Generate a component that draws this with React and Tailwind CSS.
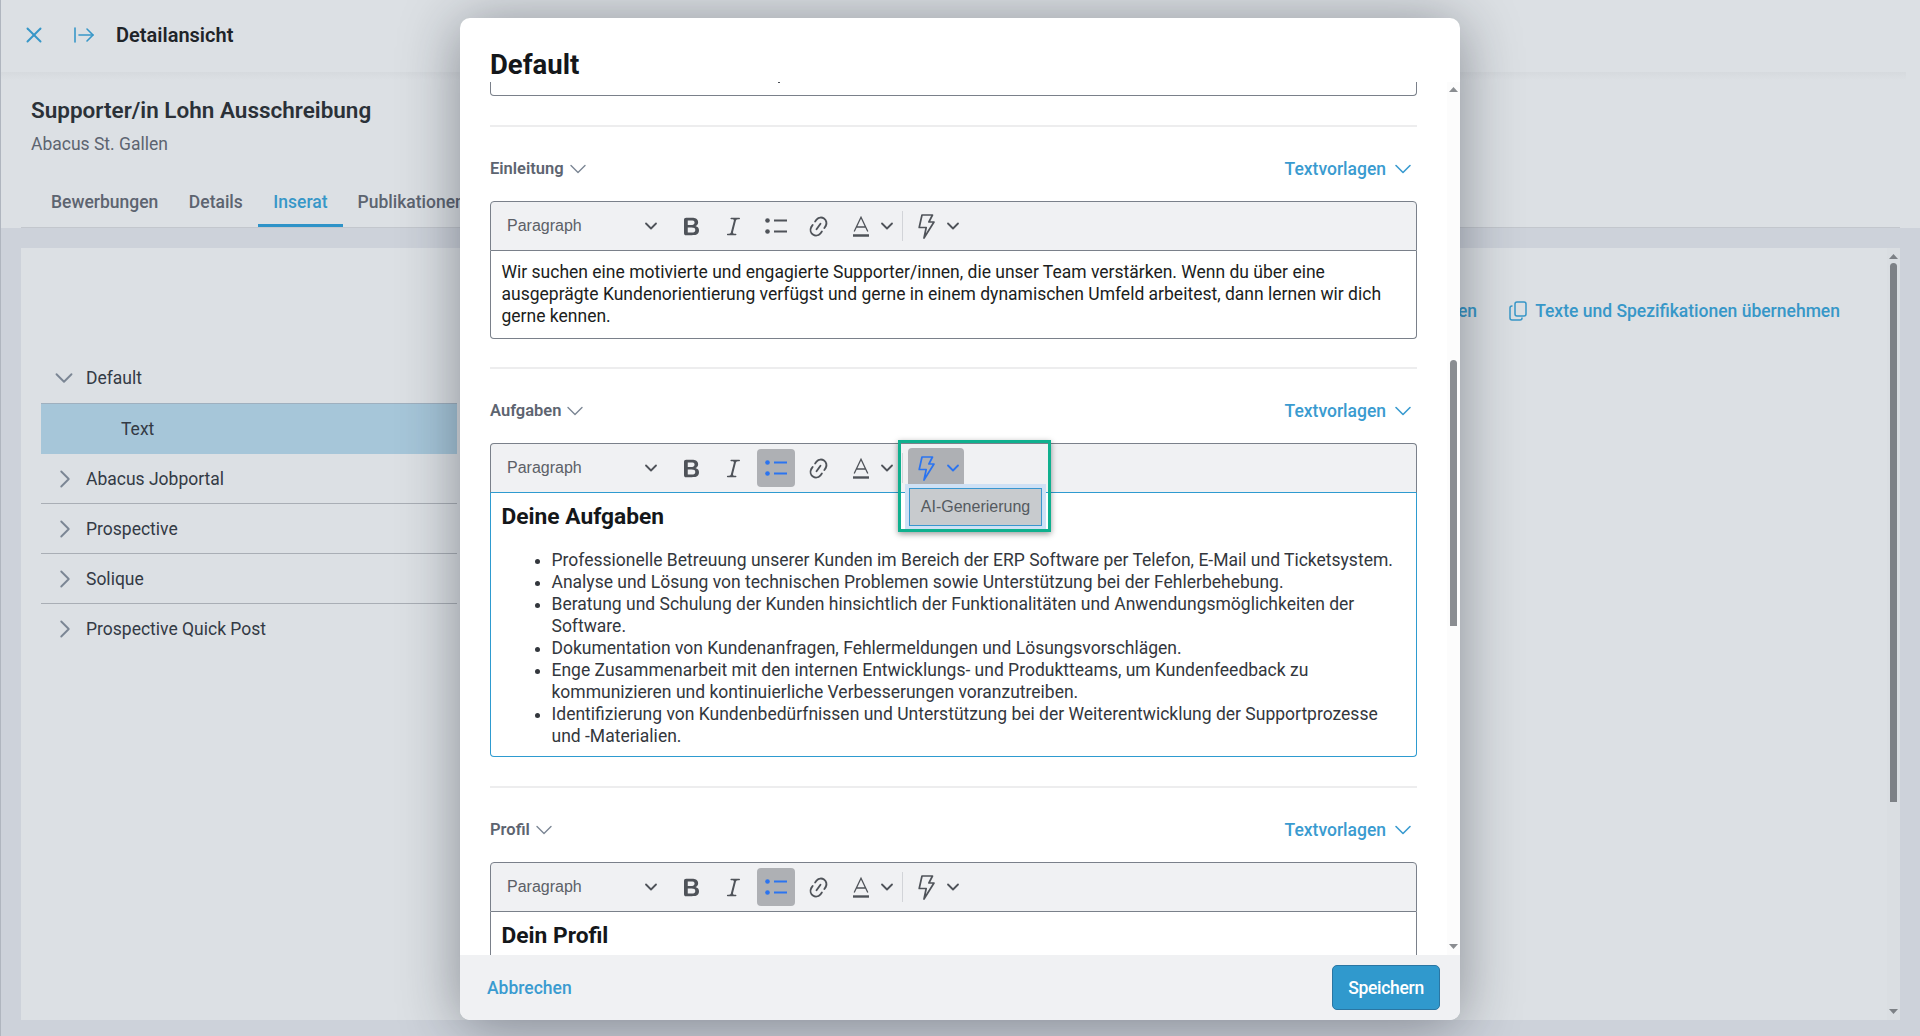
import React from "react";
import { X, ArrowRightFromLine, ChevronDown, ChevronRight } from "lucide-react";

function BoldIcon() {
  return (
    <svg viewBox="0 0 20 20" width="25" height="25" fill="#4f5359">
      <path fillRule="evenodd" d="M10.187 17H5.773c-.637 0-1.092-.138-1.364-.415-.273-.277-.409-.718-.409-1.323V4.738c0-.617.14-1.062.419-1.332.279-.27.73-.406 1.354-.406h4.68c.69 0 1.288.041 1.793.124.506.083.96.242 1.36.478.341.197.644.447.906.75a3.262 3.262 0 0 1 .808 2.162c0 1.401-.722 2.426-2.167 3.075C15.05 10.175 16 11.315 16 13.01a3.756 3.756 0 0 1-2.296 3.504 6.1 6.1 0 0 1-1.517.377c-.571.073-1.238.11-2 .11zm-.217-6.217H7v4.087h3.069c1.977 0 2.965-.69 2.965-2.072 0-.707-.256-1.22-.768-1.537-.512-.319-1.277-.478-2.296-.478zM7 5.13v3.619h2.606c.729 0 1.292-.067 1.69-.2a1.6 1.6 0 0 0 .91-.765c.165-.267.247-.566.247-.897 0-.707-.26-1.176-.778-1.409-.519-.232-1.31-.348-2.375-.348H7z" />
    </svg>
  );
}

function ItalicIcon() {
  return (
    <svg viewBox="0 0 20 20" width="25" height="25" fill="#4f5359">
      <path d="m9.586 14.633.021.004c-.036.335.095.655.393.962.082.083.173.15.274.201h1.474a.6.6 0 1 1 0 1.2H5.304a.6.6 0 0 1 0-1.2h1.15c.474-.07.809-.182 1.005-.334.157-.122.291-.32.404-.597l2.416-9.55a1.053 1.053 0 0 0-.281-.823 1.12 1.12 0 0 0-.442-.296H8.15a.6.6 0 0 1 0-1.2h6.443a.6.6 0 1 1 0 1.2h-1.195c-.376.056-.65.155-.823.296-.215.175-.423.439-.623.79l-2.366 9.347z" />
    </svg>
  );
}

function ListIcon({ color }) {
  return (
    <svg viewBox="0 0 22 18" width="22" height="18" fill="none">
      <circle cx="2.5" cy="3.5" r="2.3" fill={color} />
      <circle cx="2.5" cy="14.5" r="2.3" fill={color} />
      <path d="M9 3.5h13M9 14.5h13" stroke={color} strokeWidth="1.8" />
    </svg>
  );
}

function LinkIcon() {
  return (
    <svg viewBox="0 0 20 20" width="25" height="25" fill="#4f5359">
      <path d="m11.077 15 .991-1.416a.75.75 0 1 1 1.229.86l-1.148 1.64a.748.748 0 0 1-.217.206 5.251 5.251 0 0 1-8.503-5.955.741.741 0 0 1 .12-.274l1.147-1.639a.75.75 0 1 1 1.228.86L4.933 10.7l.006.003a3.75 3.75 0 0 0 6.132 4.294l.006.004zm5.494-5.335a.748.748 0 0 1-.12.274l-1.147 1.639a.75.75 0 1 1-1.228-.86l.86-1.23a3.75 3.75 0 0 0-6.144-4.301l-.86 1.229a.75.75 0 0 1-1.229-.86l1.148-1.64a.748.748 0 0 1 .217-.206 5.251 5.251 0 0 1 8.503 5.955zm-4.563-2.532a.75.75 0 0 1 .184 1.045l-3.155 4.505a.75.75 0 1 1-1.229-.86l3.155-4.506a.75.75 0 0 1 1.045-.184z" />
    </svg>
  );
}

function FontColorIcon() {
  return (
    <svg viewBox="0 0 18 24" width="18" height="24" fill="none">
      <path d="M2.2 17.5 9 3.2l6.8 14.3M4.4 13h9.2" stroke="#4f5359" strokeWidth="1.3" />
      <path d="M1 21.5h16" stroke="#4f5359" strokeWidth="2.4" />
    </svg>
  );
}

function BoltIcon({ color }) {
  return (
    <svg viewBox="0 0 17 25" width="17" height="25" fill="none">
      <path d="M4 1h10.5l-3.6 7H16L6 24l2.2-10.5H1.2L4 1z" stroke={color} strokeWidth="1.7" strokeLinejoin="round" />
    </svg>
  );
}

function CopyIcon() {
  return (
    <svg viewBox="0 0 18 20" width="18" height="20" fill="none" stroke="#3797c8" strokeWidth="1.5">
      <rect x="6" y="1" width="11" height="14" rx="2" />
      <path d="M3.5 5H3a2 2 0 0 0-2 2v10a2 2 0 0 0 2 2h8a2 2 0 0 0 2-2v-.5" />
    </svg>
  );
}

function Arrow({ down, color }) {
  return (
    <svg viewBox="0 0 9 5" width="9" height="5" className="shrink-0" fill={color}>
      <path d={down ? "M0 0h9L4.5 5z" : "M0 5h9L4.5 0z"} />
    </svg>
  );
}

function Toolbar({ listActive, boltActive, focused }) {
  const list = listActive ? "#2b74f0" : "#4f5359";
  const bolt = boltActive ? "#2b74f0" : "#4f5359";
  return (
    <div
      className={`flex h-[50px] items-center rounded-t-[4px] border border-[#7a808a] bg-[#f0f1f3] font-['Liberation_Sans',sans-serif] ${
        focused ? "border-b-[#2e9bd0]" : ""
      }`}
    >
      <div className="flex w-[181px] items-center justify-between pl-[16px] pr-[11px] text-[16px] text-[#5c6067]">
        <span>Paragraph</span>
        <ChevronDown size={20} strokeWidth={2.2} color="#4f5359" />
      </div>
      <div className="flex items-center gap-[4.5px]">
        <span className="flex h-[38px] w-[38px] items-center justify-center"><BoldIcon /></span>
        <span className="flex h-[38px] w-[38px] items-center justify-center"><ItalicIcon /></span>
        <span className={`flex h-[38px] w-[38px] items-center justify-center rounded-[4px] ${listActive ? "bg-[#aeb0b4]" : ""}`}>
          <ListIcon color={list} />
        </span>
        <span className="flex h-[38px] w-[38px] items-center justify-center"><LinkIcon /></span>
        <span className="flex h-[38px] w-[38px] items-center justify-center"><FontColorIcon /></span>
      </div>
      <ChevronDown size={20} strokeWidth={2.2} color="#4f5359" className="-mx-[3px]" />
      <span className="ml-[8px] h-[30px] w-px bg-[#d2d4d8]" />
      <span className={`ml-[5px] flex h-[40px] w-[56px] items-center gap-[8px] rounded-[4px] pl-[10px] ${boltActive ? "bg-[#aeb0b4]" : ""}`}>
        <BoltIcon color={bolt} />
        <ChevronDown size={20} strokeWidth={2.2} color={bolt} />
      </span>
    </div>
  );
}

function SectionHead({ label }) {
  return (
    <div className="mb-[20px] flex h-[25px] items-center justify-between pt-[1px]">
      <div className="flex items-center gap-[3px] text-[16.5px] font-semibold text-[#5d6470]">
        <span>{label}</span>
        <ChevronDown size={28} strokeWidth={1.2} color="#7b8694" className="-mx-[3px]" />
      </div>
      <div className="flex items-center gap-[3px] text-[17.5px] font-medium text-[#3a9bd0]">
        <span>Textvorlagen</span>
        <ChevronDown size={28} strokeWidth={1.4} color="#3a9bd0" />
      </div>
    </div>
  );
}

const aufgaben = [
  "Professionelle Betreuung unserer Kunden im Bereich der ERP Software per Telefon, E-Mail und Ticketsystem.",
  "Analyse und Lösung von technischen Problemen sowie Unterstützung bei der Fehlerbehebung.",
  "Beratung und Schulung der Kunden hinsichtlich der Funktionalitäten und Anwendungsmöglichkeiten der Software.",
  "Dokumentation von Kundenanfragen, Fehlermeldungen und Lösungsvorschlägen.",
  "Enge Zusammenarbeit mit den internen Entwicklungs- und Produktteams, um Kundenfeedback zu kommunizieren und kontinuierliche Verbesserungen voranzutreiben.",
  "Identifizierung von Kundenbedürfnissen und Unterstützung bei der Weiterentwicklung der Supportprozesse und -Materialien.",
];

function TreeRow({ label, last }) {
  return (
    <div className={`flex h-[50px] items-center pl-[9px] ${last ? "" : "border-b border-[#a9aeb5]"}`}>
      <ChevronRight size={30} strokeWidth={1.5} color="#7b8694" />
      <span className="ml-[6px] pt-[1px] text-[17.5px] text-[#333a45]">{label}</span>
    </div>
  );
}

function Modal() {
  return (
    <div className="absolute left-[459px] top-[18px] flex h-[1002px] w-[1000px] flex-col overflow-hidden rounded-[10px] bg-white shadow-[0_6px_60px_rgba(20,25,35,0.42)]">
      <div className="h-[64px] shrink-0 pl-[30px] pt-[30px] text-[27.5px] font-bold leading-[34px] text-[#14171a]">Default</div>
      <div className="flex min-h-0 flex-1">
        <div className="min-w-0 flex-1 overflow-hidden pl-[30px] pr-[30px]">
          <div className="relative h-[14px] rounded-b-[4px] border border-t-0 border-[#7a808a]">
            <span className="absolute left-[287px] top-[-1px] h-[2px] w-[2px] bg-[#4a4e55]" />
          </div>
          <div className="mt-[29px] border-t-2 border-[#ededee] pt-[29px]">
            <SectionHead label="Einleitung" />
            <Toolbar />
            <div className="rounded-b-[4px] border border-t-0 border-[#7a808a] pb-[11px] pl-[10.5px] pr-[10px] pt-[10px] text-[17.5px] leading-[22px] text-[#1b1d20]">
              Wir suchen eine motivierte und engagierte Supporter/innen, die unser Team verstärken. Wenn du über eine ausgeprägte Kundenorientierung verfügst und gerne in einem dynamischen Umfeld arbeitest, dann lernen wir dich gerne kennen.
            </div>
          </div>
          <div className="mt-[28px] border-t-2 border-[#ededee] pt-[29px]">
            <SectionHead label="Aufgaben" />
            <div className="relative">
              <Toolbar listActive boltActive focused />
              <div className="absolute left-[415px] top-[41px] z-10 h-[45px] w-[141px] bg-[#cfe1f5] p-[4px]">
                <div className="flex h-[38px] items-center justify-center border border-[#3a97cf] bg-[#c8cbce] font-['Liberation_Sans',sans-serif] text-[16px] text-[#555a60]">
                  AI-Generierung
                </div>
              </div>
              <div className="pointer-events-none absolute left-[408px] top-[-3px] z-20 h-[92px] w-[153px] border-[3px] border-[#0fb08e] shadow-[0_2px_6px_rgba(0,0,0,0.4)]" />
            </div>
            <div className="rounded-b-[4px] border border-t-0 border-[#2e9bd0] pb-[9px] pl-[10.5px] pr-[10px] pt-[10px] text-[17.5px] leading-[22px] text-[#33373d]">
              <h2 className="mb-[18px] text-[22.75px] font-bold leading-[28px] text-[#14171a]">Deine Aufgaben</h2>
              <ul className="list-disc pl-[50px]">
                {aufgaben.map((t) => (
                  <li key={t}>{t}</li>
                ))}
              </ul>
            </div>
          </div>
          <div className="mt-[29px] border-t-2 border-[#ededee] pt-[29px]">
            <SectionHead label="Profil" />
            <Toolbar listActive />
            <div className="h-[100px] border-x border-[#7a808a] pl-[10.5px] pr-[10px] pt-[10px]">
              <h2 className="text-[22.75px] font-bold leading-[28px] text-[#14171a]">Dein Profil</h2>
            </div>
          </div>
        </div>
        <div className="flex w-[13px] shrink-0 flex-col items-center bg-[#fcfcfc] pb-[6px] pt-[5px]">
          <Arrow color="#8a8d91" />
          <div className="mt-[268px] h-[266px] w-[7px] shrink-0 rounded-t-[4px] bg-[#8a8d91]" />
          <div className="mt-auto">
            <Arrow down color="#8a8d91" />
          </div>
        </div>
      </div>
      <div className="flex h-[65px] shrink-0 items-center justify-between bg-[#f0f1f3] pl-[27px] pr-[20px]">
        <span className="pt-[2px] text-[17.5px] font-medium text-[#3a9bd0]">Abbrechen</span>
        <span className="flex h-[45px] w-[108px] items-center justify-center rounded-[5px] border border-[#2a76a3] bg-[#3099cd] pt-[1px] text-[17.5px] font-medium tracking-[-0.3px] text-white">
          Speichern
        </span>
      </div>
    </div>
  );
}

export default function App() {
  return (
    <div className="relative h-[1036px] w-[1920px] overflow-hidden border-l border-[#b0b6bf] bg-[#cdd2da] font-[Roboto,sans-serif]">
      <div className="h-[228px] bg-[#dce0e4]">
        <div className="flex h-[70px] items-center pl-[20px]">
          <X size={26} strokeWidth={1.8} color="#3797c8" />
          <ArrowRightFromLine size={24} strokeWidth={1.6} color="#3797c8" className="ml-[25px]" />
          <span className="ml-[20px] text-[20px] font-semibold text-[#1f2429]">Detailansicht</span>
        </div>
        <div className="mt-[2px] h-[8px] w-[1905px] bg-gradient-to-b from-[#d6dade] to-[#dce0e4]" />
        <div className="px-[30px] pt-[16px]">
          <div className="text-[22.5px] font-semibold leading-[28px] text-[#2b3138]">Supporter/in Lohn Ausschreibung</div>
          <div className="mt-[8px] text-[17.5px] leading-[24px] text-[#5d6470]">Abacus St. Gallen</div>
        </div>
        <div className="ml-[20px] mt-[25px] flex h-[47px] w-[1879px] items-stretch border-b border-[#c3c7cd] pl-[30px] text-[17.5px] font-medium text-[#5d6470]">
          <span className="flex items-center pb-[4px]">Bewerbungen</span>
          <span className="ml-[30.5px] flex items-center pb-[4px]">Details</span>
          <span className="ml-[15.5px] flex items-center border-b-[3px] border-[#2e93c8] px-[15px] pb-[1px] text-[#3797c8]">Inserat</span>
          <span className="ml-[15px] flex items-center pb-[4px]">Publikationen</span>
        </div>
      </div>
      <div className="ml-[20px] mt-[20px] flex h-[772px] w-[1879px] bg-[#dce0e4]">
        <div className="ml-[20px] w-[416px] shrink-0 pt-[104px]">
          <div className="flex h-[51px] items-center pl-[8px]">
            <ChevronDown size={30} strokeWidth={1.5} color="#7b8694" />
            <span className="ml-[7px] pt-[2px] text-[17.5px] text-[#333a45]">Default</span>
          </div>
          <div className="flex h-[51px] items-center border-t border-[#9fb0bf] bg-[#a6c6d9] pl-[80px] text-[17.5px] text-[#333a45]">Text</div>
          <TreeRow label="Abacus Jobportal" />
          <TreeRow label="Prospective" />
          <TreeRow label="Solique" />
          <TreeRow label="Prospective Quick Post" last />
        </div>
        <div className="flex min-w-0 flex-1 justify-end pr-[47px] pt-[51px]">
          <div className="flex h-[24px] items-center text-[17.5px] font-medium text-[#3797c8]">
            <span>Öffnen</span>
            <span className="ml-[32px]"><CopyIcon /></span>
            <span className="ml-[8px]">Texte und Spezifikationen übernehmen</span>
          </div>
        </div>
        <div className="flex w-[13px] shrink-0 flex-col items-center bg-[#dadee2] pb-[6px] pt-[6px]">
          <Arrow color="#7d8186" />
          <div className="mt-[4px] h-[539px] w-[7px] shrink-0 rounded-t-[4px] bg-[#7d8186]" />
          <div className="mt-auto">
            <Arrow down color="#7d8186" />
          </div>
        </div>
      </div>
      <Modal />
    </div>
  );
}
